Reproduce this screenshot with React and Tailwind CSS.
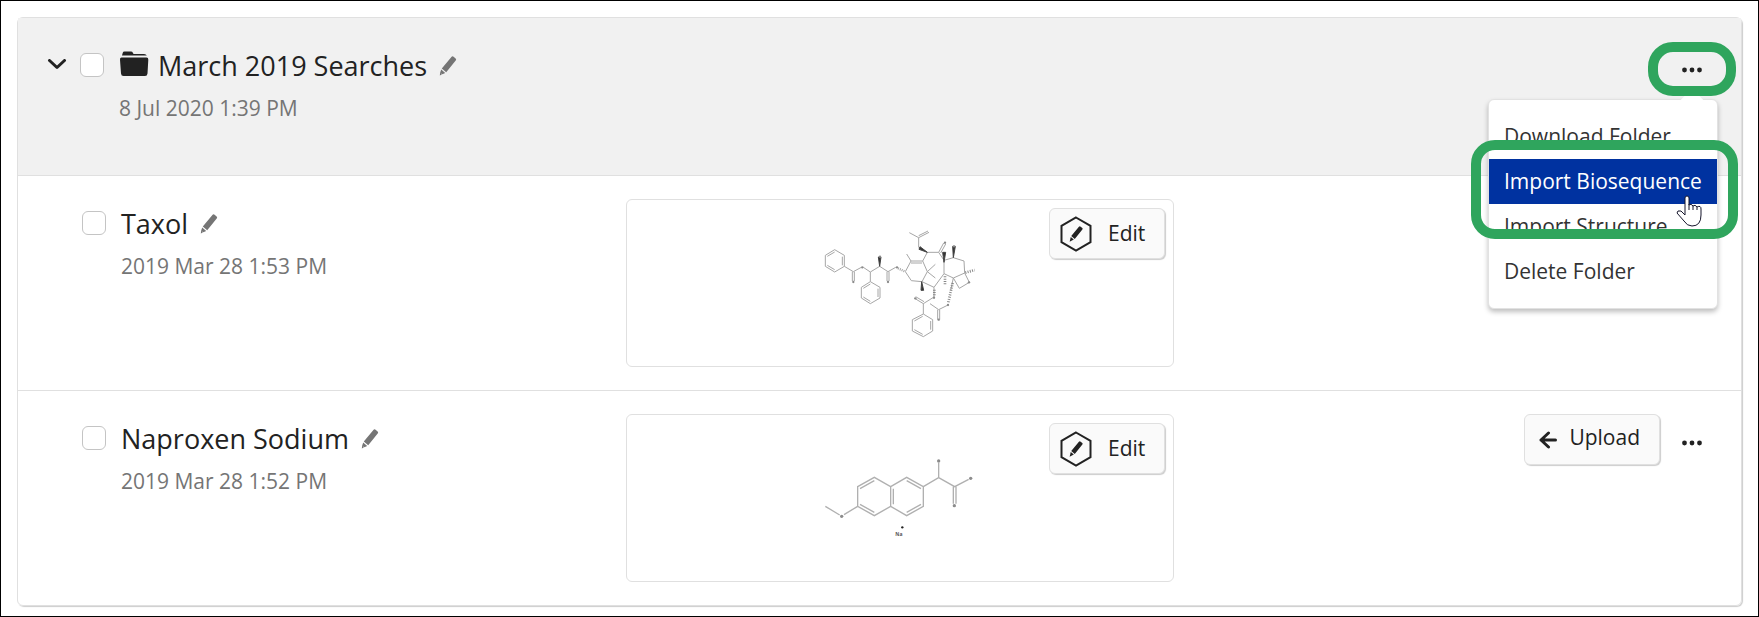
const searches = [
  { id: 'taxol', name: 'Taxol', date: '2019 Mar 28 1:53 PM', drawing: <TaxolDrawing />, actions: false },
  { id: 'naproxen', name: 'Naproxen Sodium', date: '2019 Mar 28 1:52 PM', drawing: <NaproxenDrawing />, actions: true },
];

function Pencil({ className }) {
  return (
    <svg viewBox="0 0 18 20" className={className} fill="currentColor" aria-hidden="true">
      <path d="M12.4 1Q13.4 -0.2 14.6 0.8L16.6 2.4Q17.6 3.3 16.7 4.4L7.2 16.2L2.8 12.5Z" />
      <path d="M2.2 13.5L6.2 16.9L3.4 18.2L2.2 17.2L2.8 18.6L0.8 19.6L1.2 16.5Z" />
    </svg>
  );
}

function Checkbox({ id, label }) {
  return (
    <div className="flex h-[34px] shrink-0 items-center">
      <input
        type="checkbox"
        id={id}
        aria-label={label}
        className="size-6 appearance-none rounded-md border border-[#c4c4c4] bg-white"
      />
    </div>
  );
}

function Title({ name, date, icon }) {
  return (
    <div>
      <div className="flex items-center">
        {icon}
        <h2 className="text-[27px] leading-9 text-[#222]">{name}</h2>
        <button type="button" aria-label={`Rename ${name}`} className="ml-3 text-[#757575]">
          <Pencil className="h-5 w-[18px]" />
        </button>
      </div>
      <p className="mt-2.5 text-[21px] leading-7 text-[#757575]">{date}</p>
    </div>
  );
}

function MoreButton({ label }) {
  return (
    <button type="button" aria-label={label} className="flex size-10 items-center justify-center text-[#222]">
      <svg viewBox="0 0 20 6" className="h-1.5 w-5" fill="currentColor">
        <circle cx="2.5" cy="3" r="2.4" />
        <circle cx="10" cy="3" r="2.4" />
        <circle cx="17.5" cy="3" r="2.4" />
      </svg>
    </button>
  );
}

function FolderMenu() {
  const item = 'block h-[45px] w-full px-[15px] text-left text-[21px] leading-[45px] whitespace-nowrap';

  return (
    <div className="absolute top-[49px] -right-1.5 z-10 w-[230px] rounded-md border border-[#e2e2e2] bg-white py-3.5 shadow-[0_3px_5px_rgba(0,0,0,0.25)]">
      {/* Arrow pointing at the button */}
      <div className="absolute -top-2 right-[17px] size-4 rotate-45 bg-white" />
      <button type="button" className={`${item} text-[#333]`}>Download Folder</button>
      <div className="relative">
        <button type="button" className={`${item} bg-[#0032a0] text-white`}>Import Biosequence</button>
        <div className="pointer-events-none absolute -top-[19px] -right-[21px] -bottom-[35px] -left-[18px] z-10 rounded-3xl border-10 border-[#2fa55d]" />
        <svg viewBox="0 0 26 32" className="absolute top-9 right-[15px] z-20 h-8 w-[26px]" aria-hidden="true">
          <path
            d="M9 18V3Q9 1 11 1Q13 1 13 3V10Q15 8 17 11Q19 9 21 12Q25 10 25 14V20Q25 31 16 31Q11 31 8 26L1 18Q1 15 5 16L9 20Z"
            fill="white"
            stroke="#15152b"
          />
          <path d="M13 9V15M17 11V15M21 12V15" stroke="#15152b" fill="none" />
        </svg>
      </div>
      <button type="button" className={`${item} text-[#333]`}>Import Structure</button>
      <button type="button" className={`${item} text-[#333]`}>Delete Folder</button>
    </div>
  );
}

function TaxolDrawing() {
  return (
    <svg viewBox="-15 2 570 435" className="h-[145px] w-[190px]" fill="none" stroke="#a6a6a6" strokeWidth="3">
      {/* Phenyl rings */}
      <path d="M74 118L103 135V168L74 185L46 168V135ZM74 125L52 138M97 139V165M74 178L52 165" />
      <path d="M181 214L210 231V263L181 280L154 263V231ZM181 221L160 234M204 235V260M181 273L160 260" />
      <path d="M340 311L368 328V362L340 379L307 362V328ZM338 318L313 332M362 332V358M338 372L313 358" />
      {/* Side chain */}
      <path d="M103 168L130 184L154 171M160 171L181 185L209 168L234 184L257 171M127 184V212M133 184V212M231 184V212M237 184V212M181 185V214" />
      <path d="M264 174L286 184" strokeDasharray="3 3" strokeWidth="7" />
      {/* Ring system */}
      <path d="M286 184L303 152L338 152L352 184L336 214L304 211ZM303 158H336M303 152L290 131M352 184L376 162M352 184L376 203M338 152L352 126L386 126L402 150V190L372 231L336 214" />
      <path d="M386 126L401 98M392 128L407 101M402 150L430 142L462 152L464 188L430 203L402 190M464 188L478 216L448 234L430 203" />
      <path d="M352 126L326 111V82L298 67M326 82L357 66M326 76L354 62" />
      <path d="M372 231V260L340 280V311M340 280L314 264M342 274L317 259M430 203L422 240M414 284L386 298L360 280M383 298V328M389 298V328" />
      <path d="M373 238V259M428 218L415 276M466 187L494 179M405 198V222" strokeDasharray="3 4" strokeWidth="8" stroke="#888" />
      {/* Wedge bonds */}
      <path d="M209 168L205 140H213ZM402 156L398 126H407ZM430 142L428 108H436ZM352 126L327 117L330 109ZM335 214L333 240H341Z" fill="#333" stroke="#444" />
      <g fill="#8a8a8a" stroke="none">
        <circle cx="157" cy="171" r="3.5" />
        <circle cx="130" cy="215" r="3.5" />
        <circle cx="234" cy="215" r="3.5" />
        <circle cx="261" cy="171" r="3.5" />
        <circle cx="405" cy="97" r="3.5" />
        <circle cx="372" cy="262" r="3.5" />
        <circle cx="316" cy="264" r="3.5" />
        <circle cx="414" cy="284" r="3.5" />
        <circle cx="386" cy="328" r="3.5" />
        <circle cx="477" cy="216" r="3.5" />
        <circle cx="210" cy="139" r="3.5" />
        <circle cx="432" cy="108" r="3.5" />
      </g>
    </svg>
  );
}

function NaproxenDrawing() {
  return (
    <svg viewBox="0 8 600 330" className="h-[110px] w-[200px]" fill="none" stroke="#b0b0b0" strokeWidth="4">
      <path d="M173 139L223 111L272 139V198L223 226L173 198ZM272 139L320 111L370 139V198L320 226L272 198" />
      <path d="M180 145L223 121M180 192L223 216M280 145V192M320 121L363 145M320 216L363 192" />
      <path d="M173 198L132 223M119 224L76 198M370 139L416 112V68M416 112L464 139L506 117M460 139V190M468 139V190" />
      <g fill="#8c8c8c" stroke="none">
        <circle cx="125" cy="228" r="5" />
        <circle cx="416" cy="62" r="5" />
        <circle cx="512" cy="114" r="5" />
        <circle cx="463" cy="196" r="5" />
        <circle cx="307" cy="261" r="3.5" fill="#222" />
      </g>
      <text x="286" y="287" fontSize="15" fontWeight="700" fill="#555" stroke="none">Na</text>
    </svg>
  );
}

function FolderHeader() {
  return (
    <div className="flex items-start border-b border-[#e0e0e0] bg-[#f1f1f1] pt-[30px] pb-[53px] pl-[29px]">
      <button type="button" aria-label="Collapse folder" className="mr-[13px] flex h-[34px] w-5 items-center">
        <svg viewBox="0 0 20 12" className="h-3 w-5" fill="none" stroke="#222" strokeWidth="3" strokeLinecap="round" strokeLinejoin="round">
          <path d="M2.5 1.5L10 8.5L17.5 1.5" />
        </svg>
      </button>
      <Checkbox id="folder" label="Select March 2019 Searches" />
      <div className="ml-[15px] flex-1">
        <Title
          name="March 2019 Searches"
          date="8 Jul 2020 1:39 PM"
          icon={
            <svg viewBox="0 0 30 26" className="mr-[9px] mb-1 h-[26px] w-[30px]" fill="#222" aria-hidden="true">
              <path d="M3 4.5L3.7 2Q4 0.6 5.5 0.6H12Q13.3 0.6 14 2L14.5 3H25Q27.2 3 27.8 4.5Z" />
              <path d="M2.5 6.6H27.5Q29.500 6.6 29.300 8.8L28.500 22.5Q28.300 25 26 25H4.5Q2.2 25 2 22.5L1 8.8Q0.8 6.6 2.5 6.6Z" />
            </svg>
          }
        />
      </div>
      <div className="relative mt-0.5 mr-[29px]">
        <MoreButton label="Folder options" />
        <FolderMenu />
        <div className="pointer-events-none absolute -top-2 -left-6 z-20 h-[54px] w-[88px] rounded-[25px] border-10 border-[#2fa55d]" />
      </div>
    </div>
  );
}

function SearchRow({ search }) {
  return (
    <div className="grid grid-cols-[608fr_549fr_567fr] items-start border-b border-[#e0e0e0] pb-[23px] last:border-b-0">
      <div className="flex items-start pt-[30px] pl-16">
        <Checkbox id={search.id} label={`Select ${search.name}`} />
        <div className="ml-[15px]">
          <Title name={search.name} date={search.date} />
        </div>
      </div>
      <div className="relative mt-[23px] flex h-[168px] items-center justify-center rounded-md border border-[#e0e0e0]">
        {search.drawing}
        <button
          type="button"
          className="absolute top-2 right-2 flex h-[51px] items-center gap-4 rounded-md border border-[#e0e0e0] bg-[#fafafa] pr-[19px] pl-2.5 text-[21px] text-[#222] shadow-[1px_1px_1px_rgba(0,0,0,0.2)]"
        >
          <svg viewBox="0 0 32 36" className="h-9 w-8" fill="none" stroke="#222" strokeWidth="2" aria-hidden="true">
            <path d="M16 1.5L30.5 9.8V26.2L16 34.5L1.5 26.2V9.8Z" />
            <g transform="translate(9 10) scale(0.8)" fill="#222" stroke="none">
              <path d="M12.4 1Q13.4 -0.2 14.6 0.8L16.6 2.4Q17.6 3.3 16.7 4.4L7.2 16.2L2.8 12.5Z" />
              <path d="M2.2 13.7L6 16.9L0.8 19.6Z" />
            </g>
          </svg>
          Edit
        </button>
      </div>
      {search.actions && (
        <div className="flex items-start justify-end gap-3 pt-[23px] pr-[29px]">
          <button
            type="button"
            className="flex h-[51px] items-center gap-3 rounded-md border border-[#e0e0e0] bg-[#fafafa] pr-[19px] pl-3.5 text-[21px] leading-none text-[#222] shadow-[1px_1px_1px_rgba(0,0,0,0.2)]"
          >
            <svg viewBox="0 0 18 18" className="size-[18px]" fill="none" stroke="#222" strokeWidth="3" strokeLinecap="round" strokeLinejoin="round">
              <path d="M9.5 2L2 9L9.5 16M2 9H16.5" />
            </svg>
            <span className="pb-1">Upload</span>
          </button>
          <div className="pt-[9px]">
            <MoreButton label={`${search.name} options`} />
          </div>
        </div>
      )}
    </div>
  );
}

export default function App() {
  return (
    <div className="min-h-screen border border-black bg-white px-4 pt-4 pb-2 font-['Open_Sans',sans-serif]">
      <div className="rounded-md border border-[#e0e0e0] shadow-[1px_1px_1px_rgba(0,0,0,0.2)]">
        <FolderHeader />
        {searches.map((search) => (
          <SearchRow key={search.id} search={search} />
        ))}
      </div>
    </div>
  );
}
